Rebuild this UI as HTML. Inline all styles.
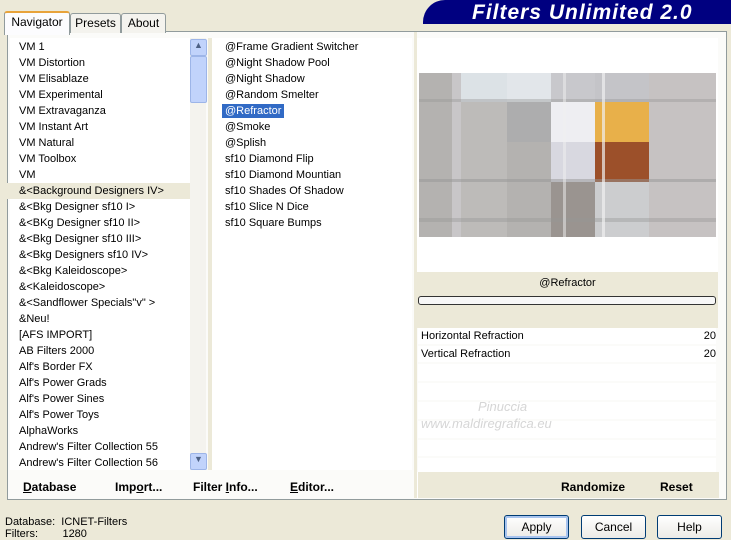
<!DOCTYPE html><html><head><style>
body{margin:0;width:731px;height:537px;background:#ece9d8;font-family:"Liberation Sans",sans-serif;font-size:11px;position:relative;overflow:hidden;color:#000}
.a{position:absolute}
.tab{position:absolute;top:13px;height:19px;border:1px solid #919b9c;border-bottom:none;background:#f4f3ee;border-radius:3px 3px 0 0;text-align:center;line-height:19px;font-size:12px}
.list div{height:16px;line-height:16px;padding-left:12px;white-space:nowrap}
.btn{position:absolute;top:515px;width:63px;height:22px;border:1px solid #003c74;border-radius:3px;background:linear-gradient(#fff,#ecebe6);text-align:center;line-height:22px;font-size:12px}
.bb{position:absolute;top:480px;font-weight:bold;font-size:12px}
.row{position:absolute;left:418px;width:298px;height:16px;background:#fff;line-height:16px}
</style></head><body>
<div class="a" style="left:423px;top:0;width:308px;height:24px;background:#000080;border-radius:22px 0 0 0"></div>
<div class="a" style="left:472px;top:1px;color:#fff;font-weight:bold;font-style:italic;font-size:21px;letter-spacing:1px">Filters Unlimited 2.0</div>
<div class="a" style="left:7px;top:31px;width:718px;height:467px;border:1px solid #919b9c;background:#fbfbf9"></div>
<div class="tab" style="left:4px;top:11px;width:64px;height:22px;background:#fcfcfe;border-top:2px solid #e8a33a;z-index:2">Navigator</div>
<div class="tab" style="left:70px;width:49px">Presets</div>
<div class="tab" style="left:121px;width:43px">About</div>
<div class="a" style="left:10px;top:38px;width:180px;height:432px;background:#fff"></div>
<div class="a list" style="left:7px;top:39px;width:183px">
<div>VM 1</div><div>VM Distortion</div><div>VM Elisablaze</div><div>VM Experimental</div><div>VM Extravaganza</div><div>VM Instant Art</div><div>VM Natural</div><div>VM Toolbox</div><div>VM</div><div style="background:#ece9d8">&amp;&lt;Background Designers IV&gt;</div><div>&amp;&lt;Bkg Designer sf10 I&gt;</div><div>&amp;&lt;BKg Designer sf10 II&gt;</div><div>&amp;&lt;Bkg Designer sf10 III&gt;</div><div>&amp;&lt;Bkg Designers sf10 IV&gt;</div><div>&amp;&lt;Bkg Kaleidoscope&gt;</div><div>&amp;&lt;Kaleidoscope&gt;</div><div>&amp;&lt;Sandflower Specials"v" &gt;</div><div>&amp;Neu!</div><div>[AFS IMPORT]</div><div>AB Filters 2000</div><div>Alf's Border FX</div><div>Alf's Power Grads</div><div>Alf's Power Sines</div><div>Alf's Power Toys</div><div>AlphaWorks</div><div>Andrew's Filter Collection 55</div><div>Andrew's Filter Collection 56</div>
</div>
<div class="a" style="left:190px;top:38px;width:16px;height:432px;background:#f4f3ee"></div>
<div class="a" style="left:190px;top:39px;width:15px;height:15px;background:#c1d3fb;border:1px solid #9db5e8;border-radius:2px;font-size:9px;text-align:center;color:#4d6185">&#9650;</div>
<div class="a" style="left:190px;top:56px;width:15px;height:45px;background:#c1d3fb;border:1px solid #9db5e8;border-radius:2px"></div>
<div class="a" style="left:190px;top:453px;width:15px;height:15px;background:#c1d3fb;border:1px solid #9db5e8;border-radius:2px;font-size:9px;text-align:center;color:#4d6185">&#9660;</div>
<div class="a" style="left:212px;top:38px;width:200px;height:432px;background:#fff"></div>
<div class="a list" style="left:213px;top:39px">
<div>@Frame Gradient Switcher</div><div>@Night Shadow Pool</div><div>@Night Shadow</div><div>@Random Smelter</div><div><span style="background:#316ac5;color:#fff;margin-left:-3px;padding:1px 3px">@Refractor</span></div><div>@Smoke</div><div>@Splish</div><div>sf10 Diamond Flip</div><div>sf10 Diamond Mountian</div><div>sf10 Shades Of Shadow</div><div>sf10 Slice N Dice</div><div>sf10 Square Bumps</div>
</div>
<div class="a" style="left:414px;top:32px;width:3px;height:466px;background:#ece9d8"></div>
<div class="a" style="left:208px;top:38px;width:4px;height:432px;background:#ece9d8"></div>
<div class="a" style="left:417px;top:38px;width:301px;height:234px;background:#fff"></div>
<div class="a" style="left:419px;top:73px;width:297px;height:164px;background:#b4b2b0;overflow:hidden">
<div class="a" style="left:33px;top:0;width:9px;height:164px;background:#c8c6c8"></div>
<div class="a" style="left:42px;top:0;width:46px;height:29px;background:#dce2e6"></div>
<div class="a" style="left:42px;top:29px;width:46px;height:170px;background:#bdbbb9"></div>
<div class="a" style="left:88px;top:0;width:44px;height:29px;background:#e2e6ea"></div>
<div class="a" style="left:88px;top:29px;width:44px;height:40px;background:#adadae"></div>
<div class="a" style="left:132px;top:0;width:44px;height:29px;background:#c8c8cc"></div>
<div class="a" style="left:132px;top:29px;width:44px;height:40px;background:#eeeef2"></div>
<div class="a" style="left:132px;top:69px;width:44px;height:40px;background:#d8d8e0"></div>
<div class="a" style="left:132px;top:109px;width:44px;height:55px;background:#9a9490"></div>
<div class="a" style="left:176px;top:0;width:54px;height:29px;background:#c4c4c8"></div>
<div class="a" style="left:176px;top:29px;width:54px;height:40px;background:#e8b04a"></div>
<div class="a" style="left:176px;top:69px;width:54px;height:40px;background:#9c502a"></div>
<div class="a" style="left:176px;top:109px;width:54px;height:55px;background:#cccdcf"></div>
<div class="a" style="left:230px;top:0;width:67px;height:164px;background:#c6c2c2"></div>
<div class="a" style="left:0;top:26px;width:297px;height:3px;background:rgba(150,150,150,.4)"></div>
<div class="a" style="left:0;top:106px;width:297px;height:3px;background:rgba(150,150,150,.5)"></div>
<div class="a" style="left:0;top:145px;width:297px;height:4px;background:rgba(150,150,150,.4)"></div>
<div class="a" style="left:183px;top:0;width:3px;height:164px;background:rgba(240,240,240,.7)"></div>
<div class="a" style="left:144px;top:0;width:3px;height:164px;background:rgba(240,240,240,.5)"></div>
</div>
<div class="a" style="left:417px;top:272px;width:301px;height:56px;background:#ece9d8"></div>
<div class="a" style="left:417px;top:277px;width:301px;text-align:center;font-size:11px">@Refractor</div>
<div class="a" style="left:418px;top:296px;width:296px;height:7px;border:1px solid #333;border-radius:3px;background:#f7f7f7"></div>
<div class="row" style="top:328px">&nbsp;Horizontal Refraction<span style="float:right">20</span></div>
<div class="row" style="top:346px">&nbsp;Vertical Refraction<span style="float:right">20</span></div>
<div class="row" style="top:364px;height:17px"></div><div class="row" style="top:383px;height:17px"></div><div class="row" style="top:402px;height:17px"></div><div class="row" style="top:421px;height:17px"></div><div class="row" style="top:440px;height:16px"></div><div class="row" style="top:458px;height:14px"></div>
<div class="a" style="left:478px;top:399px;color:#d6d6d6;font-size:13px;font-style:italic">Pinuccia</div>
<div class="a" style="left:421px;top:416px;color:#d6d6d6;font-size:13px;font-style:italic">www.maldiregrafica.eu</div>
<div class="a" style="left:417px;top:472px;width:301px;height:26px;background:#ece9d8;border-left:1px solid #fff"></div>
<div class="bb" style="left:23px"><u>D</u>atabase</div>
<div class="bb" style="left:115px">Imp<u>o</u>rt...</div>
<div class="bb" style="left:193px">Filter <u>I</u>nfo...</div>
<div class="bb" style="left:290px"><u>E</u>ditor...</div>
<div class="bb" style="left:561px">Randomize</div>
<div class="bb" style="left:660px">Reset</div>
<div class="a" style="left:5px;top:516px;font-size:11px">Database:&nbsp; ICNET-Filters</div>
<div class="a" style="left:5px;top:528px;font-size:11px">Filters:&nbsp;&nbsp;&nbsp;&nbsp;&nbsp;&nbsp;&nbsp; 1280</div>
<div class="btn" style="left:504px;box-shadow:inset 0 0 0 2px #a8c4ee">Apply</div>
<div class="btn" style="left:581px">Cancel</div>
<div class="btn" style="left:657px">Help</div>
</body></html>
